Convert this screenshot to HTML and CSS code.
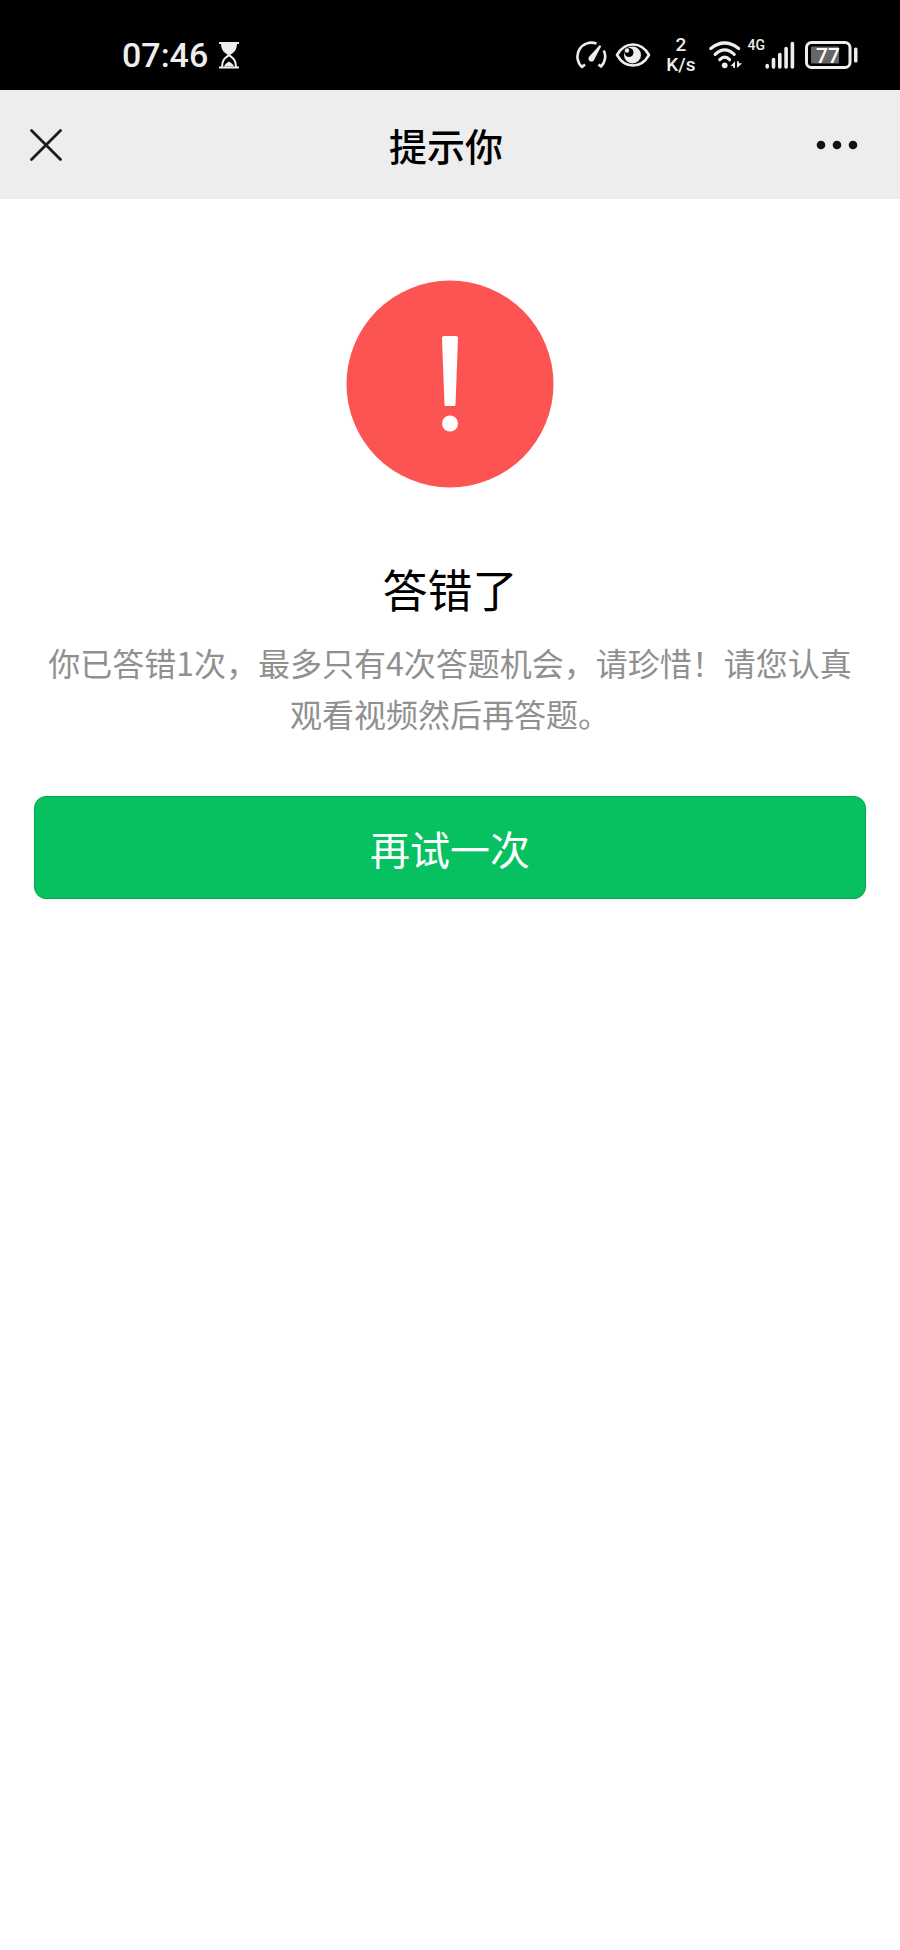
FILE: index.html
```html
<!DOCTYPE html>
<html lang="zh-CN">
<head>
    <meta charset="UTF-8">
    <meta name="viewport" content="width=device-width, initial-scale=1.0">
    <title>提示你</title>
    <link rel="stylesheet" href="styles.css">
</head>
<body>
    <div class="status-bar">
        <div class="status-left">
            <span class="time">07:46</span>
            <svg width="22" height="28" viewBox="0 0 22 28" aria-hidden="true">
                <path d="M1 2H21M1 26.500H21" stroke="#eee" stroke-width="2"/>
                <path d="M3 2H19C19 9 16 11.500 12 14H10C6 11.500 3 9 3 2Z" fill="#eee"/>
                <path d="M4 26C4 19 7 17 10.500 14.500H11.500C15 17 18 19 18 26" fill="none" stroke="#eee" stroke-width="2"/>
                <path d="M6 25.500C7 22.500 9 22 11 20.500C13 22 15 22.500 16 25.500Z" fill="#eee"/>
            </svg>
        </div>
        <div class="status-right">
            <svg width="32" height="30" viewBox="0 0 32 30" aria-hidden="true">
                <path d="M10 24.500L7 27A14 14 0 0 1 21.500 3.600M28.800 10.500A14 14 0 0 1 26 26.500L23.500 24.500" fill="none" stroke="#eee" stroke-width="2.600" stroke-linejoin="round"/>
                <path d="M24.800 5L26.200 6.200L19.300 19.500A3 3 0 1 1 14.300 16.500Z" fill="#eee"/>
            </svg>
            <svg class="eye" width="36" height="26" viewBox="0 0 36 26" aria-hidden="true">
                <path d="M2 13C10 -1 26 -1 34 13C26 27 10 27 2 13Z" fill="none" stroke="#eee" stroke-width="2.600" stroke-linejoin="round"/>
                <circle cx="17.500" cy="13" r="8.500" fill="#eee"/>
                <circle cx="14" cy="10.500" r="4.500" fill="#000"/>
                <circle cx="12" cy="8.500" r="2.200" fill="#eee"/>
            </svg>
            <div class="speed"><span>2</span><span>K/s</span></div>
            <svg width="36" height="30" viewBox="0 0 36 30" aria-hidden="true">
                <g fill="none" stroke="#eee" stroke-width="3.200" stroke-linecap="round">
                    <path d="M2.800 8.500Q16.700 -2.500 30.600 8.500"/>
                    <path d="M7.200 14.300Q16.700 5.500 26.200 14.300"/>
                    <path d="M11.800 19.700Q16.700 14.500 21.600 19.700"/>
                </g>
                <circle cx="16.700" cy="25.300" r="2.900" fill="#eee"/>
                <path d="M27 21.200V28H25.200V26H22.600ZM29 28V21.200H30.800V23.200H34.200Z" fill="#eee"/>
            </svg>
            <span class="network">4G</span>
            <svg width="30" height="28" viewBox="0 0 30 28" aria-hidden="true">
                <path d="M2.200 24.500V26M8.500 18.500V26M14.800 13.500V26M21.100 7.500V26M27.400 2.500V26" stroke="#eee" stroke-width="3.600" stroke-linecap="round"/>
            </svg>
            <svg class="battery" width="54" height="30" viewBox="0 0 54 30" aria-hidden="true">
                <rect x="2.500" y="2.500" width="43.500" height="25" rx="5" fill="none" stroke="#eee" stroke-width="3"/>
                <rect x="7" y="6.500" width="28" height="17" rx="1" fill="#666"/>
                <rect x="50" y="7.500" width="3.500" height="15" rx="1.500" fill="#eee"/>
                <text x="24" y="23" text-anchor="middle" class="battery-text">77</text>
            </svg>
        </div>
    </div>

    <header class="navbar">
        <button type="button" class="nav-btn" aria-label="关闭">
            <svg width="32" height="32" viewBox="0 0 32 32">
                <path d="M1.500 1.500L30.500 30.500M30.500 1.500L1.500 30.500" stroke="#1c1c1c" stroke-width="2.800" stroke-linecap="round"/>
            </svg>
        </button>
        <h1>提示你</h1>
        <button type="button" class="nav-btn nav-more" aria-label="更多">
            <svg width="42" height="10" viewBox="0 0 42 10" fill="#111">
                <circle cx="5" cy="5" r="4.300"/>
                <circle cx="21" cy="5" r="4.300"/>
                <circle cx="37" cy="5" r="4.300"/>
            </svg>
        </button>
    </header>

    <main class="message">
        <svg width="208" height="208" viewBox="0 0 208 208" aria-hidden="true">
            <circle cx="104" cy="104" r="103.500" fill="#fc5452"/>
            <path d="M98 56H110Q112 56 112 58L109.500 124.500Q109.400 126 108 126H100Q98.600 126 98.500 124.500L96 58Q96 56 98 56Z" fill="#fff"/>
            <circle cx="104" cy="143.500" r="8" fill="#fff"/>
        </svg>
        <h2>答错了</h2>
        <p>你已答错1次，最多只有4次答题机会，请珍惜！请您认真观看视频然后再答题。</p>
        <button type="button" class="retry-btn">再试一次</button>
    </main>
</body>
</html>
```
FILE: styles.css
```css
* {
    box-sizing: border-box;
}

body {
    margin: 0;
    background-color: #fff;
    color: #000;
    font-family: "Noto Sans CJK SC", sans-serif;
}

svg {
    display: block;
    flex-shrink: 0;
}

/* Status bar */
.status-bar {
    display: flex;
    justify-content: space-between;
    align-items: center;
    height: 90px;
    padding: 20px 42px 0 122px;
    background-color: #000;
    color: #eee;
    font-family: Roboto, sans-serif;
}

.status-left,
.status-right {
    display: flex;
    align-items: center;
}

.status-left {
    gap: 10px;
}

.time {
    font-size: 34px;
    font-weight: 500;
    line-height: 40px;
}

.eye {
    margin-left: 8px;
}

.speed {
    display: flex;
    flex-direction: column;
    align-items: center;
    margin: 0 12px 0 15px;
    font-size: 19px;
    font-weight: 500;
    line-height: 20px;
}

.network {
    align-self: flex-start;
    margin-left: 4px;
    font-size: 14px;
    font-weight: 500;
    line-height: 20px;
}

.battery {
    margin-left: 9px;
}

.battery-text {
    fill: #fff;
    font-size: 21px;
    font-weight: 500;
}

/* Navigation bar */
.navbar {
    display: grid;
    grid-template-columns: 1fr auto 1fr;
    align-items: center;
    height: 109px;
    padding: 0 26px 0 18px;
    background-color: #ededed;
}

.navbar h1 {
    margin: 0;
    font-size: 38px;
    font-weight: 500;
    line-height: 56px;
}

.nav-btn {
    justify-self: start;
    padding: 12px;
    border: none;
    background: none;
    cursor: pointer;
}

.nav-more {
    justify-self: end;
    padding: 16px;
}

/* Message page */
.message {
    display: flex;
    flex-direction: column;
    align-items: center;
    padding: 81px 34px;
    text-align: center;
}

.message h2 {
    margin: 71px 0 18px;
    font-size: 45px;
    font-weight: 400;
    line-height: 60px;
}

.message p {
    margin: 0 0 57px;
    color: #909090;
    font-size: 32px;
    line-height: 51px;
}

.retry-btn {
    width: 100%;
    height: 103px;
    border: 1px solid #06a552;
    border-radius: 12px;
    background-color: #07c160;
    color: #fff;
    font-family: inherit;
    font-size: 40px;
    cursor: pointer;
}
```
